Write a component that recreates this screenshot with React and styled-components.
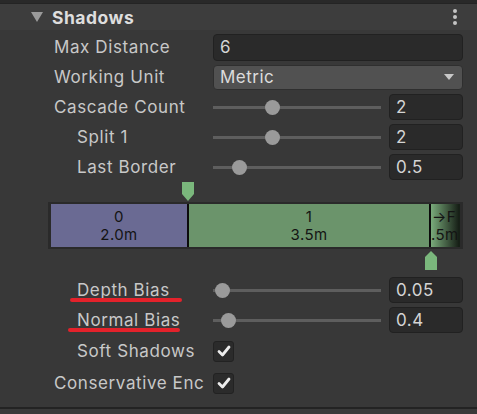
import React from "react";
import styled, { createGlobalStyle } from "styled-components";

const GlobalStyle = createGlobalStyle`
  body {
    margin: 0;
    background: #383838;
  }
`;

const Panel = styled.div`
  display: flex;
  flex-direction: column;
  width: 477px;
  height: 414px;
  overflow: hidden;
  background: #383838;
  font-family: Inter, "Noto Sans", sans-serif;
  color: #c8c8c8;
`;

const TopStrip = styled.div`
  height: 3px;
  background: #292929;
  border-bottom: 1px solid #242424;
`;

const Header = styled.div`
  display: flex;
  align-items: center;
  height: 26px;
  padding: 0 20px 0 31px;
  background: #3d3d3d;
`;

const Foldout = styled.span`
  width: 0;
  height: 0;
  border-left: 6px solid transparent;
  border-right: 6px solid transparent;
  border-top: 10px solid #9a9a9a;
  margin-right: 9px;
`;

const Title = styled.span`
  flex: 1;
  font-size: 17.5px;
  font-weight: 700;
  letter-spacing: 0.5px;
  color: #dedede;
`;

const Kebab = styled.span`
  display: flex;
  flex-direction: column;
  gap: 2px;

  i {
    display: block;
    width: 4px;
    height: 4px;
    border-radius: 50%;
    background: #c4c4c4;
  }
`;

const Body = styled.div`
  display: flex;
  flex-direction: column;
  flex: 1;
  padding-top: 2px;
`;

const Row = styled.div`
  display: grid;
  grid-template-columns: 213px 1fr;
  align-items: center;
  height: ${({ tall }) => (tall ? 32 : 30)}px;
  padding-right: 14px;
`;

const Label = styled.div`
  position: relative;
  height: 100%;
  display: flex;
  align-items: center;
  padding-left: ${({ indent }) => (indent ? 77 : 54)}px;
  font-size: 17px;
  letter-spacing: 0.6px;
  white-space: nowrap;

  &::after {
    content: "";
    display: ${({ marked }) => (marked ? "block" : "none")};
    position: absolute;
    left: ${({ marked }) => marked || 0}px;
    top: 23px;
    width: 112px;
    height: 4px;
    border-radius: 2px;
    background: #e3222b;
  }
`;

const TextField = styled.div`
  display: flex;
  align-items: center;
  height: 27px;
  box-sizing: border-box;
  padding-left: 6px;
  background: #2a2a2a;
  border: 1px solid #212121;
  border-radius: 4px;
  font-size: 17px;
  letter-spacing: 0.5px;
  color: #d4d4d4;
`;

const Dropdown = styled.div`
  display: flex;
  align-items: center;
  justify-content: space-between;
  height: 25px;
  box-sizing: border-box;
  padding: 0 8px 0 6px;
  background: #515151;
  border: 1px solid #2f2f2f;
  border-radius: 4px;
  font-size: 17px;
  letter-spacing: 0.5px;
  color: #dcdcdc;
`;

const Caret = styled.span`
  width: 0;
  height: 0;
  border-left: 5px solid transparent;
  border-right: 5px solid transparent;
  border-top: 6px solid #c8c8c8;
`;

const SliderField = styled.div`
  display: flex;
  align-items: center;
  gap: 8px;
`;

const Track = styled.div`
  position: relative;
  flex: 1;
  height: 15px;

  &::before {
    content: "";
    position: absolute;
    left: 0;
    right: 0;
    top: 6px;
    height: 3px;
    background: #5e5e5e;
  }
`;

const Thumb = styled.span`
  position: absolute;
  top: 0;
  width: 15px;
  height: 15px;
  border-radius: 50%;
  background: #9a9a9a;
`;

const NumberField = styled(TextField)`
  width: 74px;
  height: 26px;
`;

const Checkbox = styled.div`
  display: flex;
  align-items: center;
  justify-content: center;
  width: 21px;
  height: 21px;
  box-sizing: border-box;
  background: #2b2b2b;
  border: 1px solid #222;
  border-radius: 3px;
`;

const Cascade = styled.div`
  padding: 0 14px 0 48px;
  margin-bottom: 4px;
`;

const HandleLane = styled.div`
  position: relative;
  height: ${({ h }) => h}px;
`;

const Handle = styled.svg`
  position: absolute;
  top: ${({ up }) => (up ? 2 : 0)}px;
`;

const Bar = styled.div`
  display: flex;
  height: 47px;
  box-sizing: border-box;
  border: 3px solid #2a2a2a;
  border-top-width: 2px;
  border-bottom-width: 2px;
`;

const Segment = styled.div`
  display: flex;
  flex-direction: column;
  align-items: ${({ align }) => align || "center"};
  justify-content: center;
  width: ${({ w }) => w}px;
  flex: none;
  background: ${({ bg }) => bg};
  overflow: hidden;
  font-size: 15px;
  line-height: 18px;
  letter-spacing: 0.4px;
  color: #141414;
  white-space: nowrap;
`;

const SegmentLine = styled.div`
  height: 18px;
  padding-left: ${({ inset }) => inset || 0}px;
`;

const Divider = styled.div`
  width: 2px;
  flex: none;
  background: #0c0c0c;
`;

const Footer = styled.div`
  margin-top: auto;
  height: 5px;
  border-top: 2px solid #232323;
  background: #3a3a3a;
`;

const Check = () => (
  <svg width="14" height="12" viewBox="0 0 14 12">
    <path d="M2 6.5 L5.5 10 L12 2" fill="none" stroke="#ececec" strokeWidth="2.8" strokeLinecap="round" strokeLinejoin="round" />
  </svg>
);

const Slider = ({ pos, value }) => (
  <SliderField>
    <Track>
      <Thumb style={{ left: pos * 153 }} />
    </Track>
    <NumberField>{value}</NumberField>
  </SliderField>
);

const Marker = ({ left, up }) => (
  <Handle up={up} width="14" height="20" viewBox="0 0 14 20" style={{ left }}>
    <path
      d={up ? "M7 0 L13 6 V19 H1 V6 Z" : "M1 0 H13 V12 L7 19 L1 12 Z"}
      fill="#7ab77c"
    />
  </Handle>
);

export default function App() {
  return (
    <>
      <GlobalStyle />
      <Panel>
        <TopStrip />
        <Header>
          <Foldout />
          <Title>Shadows</Title>
          <Kebab>
            <i />
            <i />
            <i />
          </Kebab>
        </Header>
        <Body>
          <Row>
            <Label>Max Distance</Label>
            <TextField>6</TextField>
          </Row>
          <Row>
            <Label>Working Unit</Label>
            <Dropdown>
              Metric
              <Caret />
            </Dropdown>
          </Row>
          <Row>
            <Label>Cascade Count</Label>
            <Slider pos={0.337} value="2" />
          </Row>
          <Row>
            <Label indent>Split 1</Label>
            <Slider pos={0.337} value="2" />
          </Row>
          <Row>
            <Label indent>Last Border</Label>
            <Slider pos={0.127} value="0.5" />
          </Row>

          <Cascade>
            <HandleLane h={20}>
              <Marker left={133} />
            </HandleLane>
            <Bar>
              <Segment w={136} bg="#6a6a93">
                <SegmentLine>0</SegmentLine>
                <SegmentLine>2.0m</SegmentLine>
              </Segment>
              <Divider />
              <Segment w={240} bg="#6b946b">
                <SegmentLine>1</SegmentLine>
                <SegmentLine>3.5m</SegmentLine>
              </Segment>
              <Divider />
              <Segment w={29} align="flex-start" bg="linear-gradient(to right, #7aab7b, #172017 95%)">
                <SegmentLine inset={1}>→F</SegmentLine>
                <SegmentLine>.5m</SegmentLine>
              </Segment>
            </Bar>
            <HandleLane h={22}>
              <Marker left={376} up />
            </HandleLane>
          </Cascade>

          <Row>
            <Label indent marked={70}>Depth Bias</Label>
            <Slider pos={0.01} value="0.05" />
          </Row>
          <Row>
            <Label indent marked={68}>Normal Bias</Label>
            <Slider pos={0.05} value="0.4" />
          </Row>
          <Row tall>
            <Label indent>Soft Shadows</Label>
            <Checkbox>
              <Check />
            </Checkbox>
          </Row>
          <Row tall>
            <Label>Conservative Enc</Label>
            <Checkbox>
              <Check />
            </Checkbox>
          </Row>
          <Footer />
        </Body>
      </Panel>
    </>
  );
}
